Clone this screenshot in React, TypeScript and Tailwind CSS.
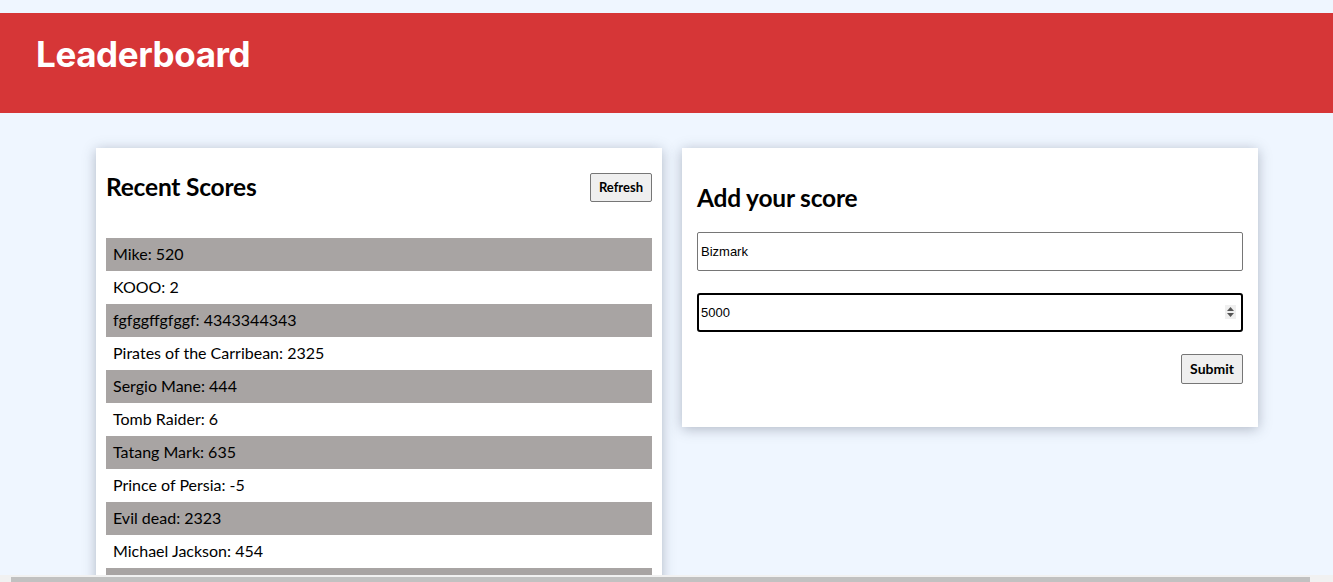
import { useState } from "react";

const scores = [
  "Mike: 520",
  "KOOO: 2",
  "fgfggffgfggf: 4343344343",
  "Pirates of the Carribean: 2325",
  "Sergio Mane: 444",
  "Tomb Raider: 6",
  "Tatang Mark: 635",
  "Prince of Persia: -5",
  "Evil dead: 2323",
  "Michael Jackson: 454",
  "Lara Croft: 120",
];

export default function App() {
  const [name, setName] = useState("Bizmark");
  const [score, setScore] = useState("5000");

  return (
    <div className="min-h-screen bg-[#eff6ff] pt-[13px] font-['Lato','Noto_Sans',sans-serif] text-black">
      <header className="flex h-[100px] items-center bg-[#d63637] px-9">
        <h1 className="-mt-[17px] font-['Inter',sans-serif] text-[35px] font-bold tracking-[-0.4px] text-white">Leaderboard</h1>
      </header>

      <main className="flex items-start gap-5 pl-[96px] pt-[35px]">
        <section className="w-[566px] bg-white p-[10px] shadow-[0_2px_12px_rgba(60,70,90,0.35)]">
          <div className="flex items-center justify-between pb-[32px] pt-[11px]">
            <h2 className="text-[24.5px] font-bold tracking-[-0.2px]">Recent Scores</h2>
            <button className="h-[29px] rounded-[2px] border border-[#767676] bg-[#efefef] px-[8px] text-[13px] font-bold">
              Refresh
            </button>
          </div>
          <ul>
            {scores.map((item, i) => (
              <li
                key={item}
                className={`flex h-[33px] items-center px-[7px] text-[16px] ${i % 2 === 0 ? "bg-[#a8a4a3]" : "bg-white"}`}
              >
                {item}
              </li>
            ))}
          </ul>
        </section>

        <section className="w-[576px] bg-white px-[15px] pb-[43px] pt-[32px] shadow-[0_2px_12px_rgba(60,70,90,0.35)]">
          <h2 className="text-[24.5px] font-bold tracking-[-0.2px]">Add your score</h2>
          <form className="mt-[15px] flex flex-col" onSubmit={(e) => e.preventDefault()}>
            <input
              className="h-[39px] w-full rounded-[2px] border border-[#767676] px-[3px] font-['Liberation_Sans',Arial,sans-serif] text-[13px] outline-none"
              value={name}
              onChange={(e) => setName(e.target.value)}
            />
            <div className="mt-[22px] flex h-[39px] items-center rounded-[3px] border-2 border-black pl-[2px] pr-[5px]">
              <input
                className="w-full bg-transparent font-['Liberation_Sans',Arial,sans-serif] text-[13px] outline-none"
                value={score}
                onChange={(e) => setScore(e.target.value)}
              />
              <svg width="11" height="14" viewBox="0 0 11 14" className="shrink-0 bg-[#efefef]">
                <path d="M5.5 2 L9 6 H2 Z" fill="#555" />
                <path d="M5.5 12 L9 8 H2 Z" fill="#555" />
              </svg>
            </div>
            <div className="mt-[22px] flex justify-end">
              <button className="h-[30px] rounded-[2px] border border-[#767676] bg-[#efefef] px-[8px] text-[14px] font-bold">
                Submit
              </button>
            </div>
          </form>
        </section>
      </main>

      <div className="fixed inset-x-0 bottom-0 flex h-[7px] items-end bg-[#f1f1f1]">
        <div className="ml-[11px] h-[5px] w-[1299px] bg-[#c1c1c1]" />
      </div>
    </div>
  );
}
